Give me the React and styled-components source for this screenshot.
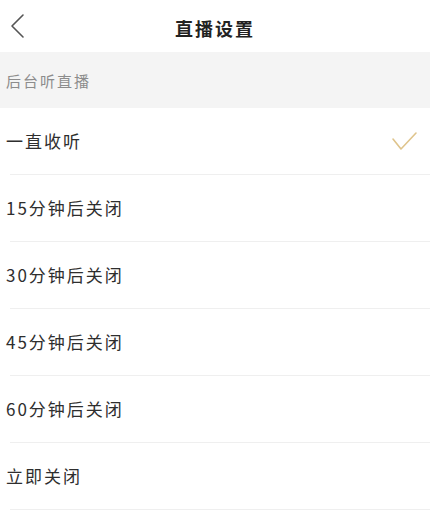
import styled, { createGlobalStyle } from "styled-components";

const GlobalStyle = createGlobalStyle`
  html, body {
    margin: 0;
    padding: 0;
    background: #ffffff;
  }
  body {
    font-family: "Noto Sans CJK SC", "Noto Sans", sans-serif;
  }
`;

const Page = styled.div`
  width: 430px;
  min-height: 515px;
  background: #fff;
  display: flex;
  flex-direction: column;
`;

const Header = styled.header`
  height: 52px;
  display: grid;
  grid-template-columns: 60px 1fr 60px;
  align-items: center;
`;

const BackButton = styled.button`
  border: none;
  background: none;
  padding: 0 0 0 10px;
  height: 52px;
  display: flex;
  align-items: center;
  cursor: pointer;
`;

const Title = styled.h1`
  margin: 0;
  padding-top: 4px;
  text-align: center;
  font-size: 18px;
  font-weight: 700;
  letter-spacing: 2px;
  color: #222;
`;

const SectionLabel = styled.div`
  height: 56px;
  background: #f4f4f4;
  display: flex;
  align-items: center;
  padding-left: 6px;
  font-size: 15px;
  letter-spacing: 2px;
  color: #8c8c8c;
`;

const List = styled.ul`
  list-style: none;
  margin: 0;
  padding: 0;
`;

const Row = styled.li`
  height: 67px;
  display: flex;
  align-items: center;
  justify-content: space-between;
  padding: 0 12px 2px 6px;
  box-sizing: border-box;
  position: relative;
  font-size: 17px;
  letter-spacing: 2px;
  color: #2e2e2e;
  cursor: pointer;

  &::after {
    content: "";
    position: absolute;
    left: 10px;
    right: 0;
    bottom: 0;
    height: 1px;
    background: #efefef;
  }
`;

const options = [
  "一直收听",
  "15分钟后关闭",
  "30分钟后关闭",
  "45分钟后关闭",
  "60分钟后关闭",
  "立即关闭",
];

function Check() {
  return (
    <svg width="28" height="22" viewBox="0 0 28 22" fill="none">
      <path
        d="M3 9 L11 19 L26 3"
        stroke="#dfc48c"
        strokeWidth="1.6"
        strokeLinecap="round"
        strokeLinejoin="round"
      />
    </svg>
  );
}

export default function App() {
  const selected = 0;
  return (
    <Page>
      <GlobalStyle />
      <Header>
        <BackButton aria-label="返回">
          <svg width="16" height="26" viewBox="0 0 16 26" fill="none">
            <path
              d="M13 2 L2 13 L13 24"
              stroke="#555"
              strokeWidth="1.6"
              strokeLinecap="round"
              strokeLinejoin="round"
            />
          </svg>
        </BackButton>
        <Title>直播设置</Title>
        <span />
      </Header>
      <SectionLabel>后台听直播</SectionLabel>
      <List>
        {options.map((label, i) => (
          <Row key={label}>
            <span>{label}</span>
            {i === selected && <Check />}
          </Row>
        ))}
      </List>
    </Page>
  );
}
